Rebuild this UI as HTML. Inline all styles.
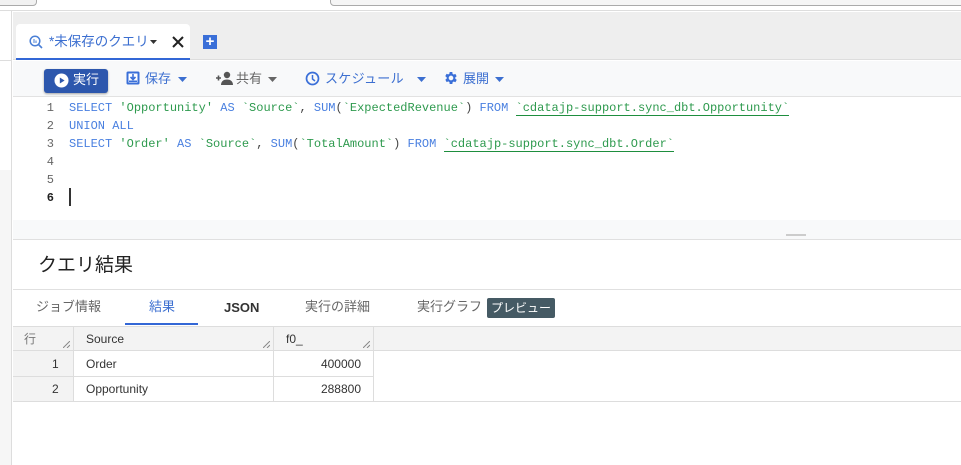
<!DOCTYPE html>
<html><head><meta charset="utf-8"><style>
*{box-sizing:border-box;margin:0;padding:0}
body{width:961px;height:465px;overflow:hidden;background:#fff;font-family:"Liberation Sans","Noto Sans CJK JP",sans-serif;position:relative}
.a{position:absolute;line-height:16px}
.mono{font-family:"Liberation Mono",monospace;font-size:12px}
</style></head><body>
<div class="a" style="left:0;top:0;width:961px;height:11px;background:#fff;border-bottom:1px solid #ddd"></div>
<div class="a" style="left:-5px;top:-6px;width:42px;height:12px;border:1px solid #aaa;border-radius:4px;background:#f1f1f1"></div>
<div class="a" style="left:330px;top:-6px;width:640px;height:12px;border:1px solid #aaa;border-radius:4px;background:#f5f5f5"></div>
<div class="a" style="left:0;top:11px;width:12px;height:454px;background:#fff;border-right:1px solid #ddd"></div>
<div class="a" style="left:0;top:60px;width:12px;height:1px;background:#ddd"></div>
<div class="a" style="left:0;top:170px;width:12px;height:295px;background:#f6f6f6;border-right:1px solid #ddd"></div>
<div class="a" style="left:13px;top:12px;width:948px;height:48px;background:#eeeeee;border-bottom:1px solid #ddd"></div>
<div class="a" style="left:16px;top:24px;width:174px;height:36px;background:#fff;border-radius:4px 4px 0 0;border-bottom:2px solid #3367d6"></div>
<svg class="a" style="left:29px;top:35px" width="14" height="14" viewBox="0 0 14 14"><circle cx="6" cy="6" r="4.8" fill="none" stroke="#4a7fd6" stroke-width="1.5"/><path d="M9.5 9.5L13 13" stroke="#4a7fd6" stroke-width="1.6"/><path d="M5 4v4M7 5.5v2.5" stroke="#4a7fd6" stroke-width="1"/></svg>
<div class="a" style="left:49px;top:34px;font-size:13.5px;color:#3c6fd0">*未保存のクエリ</div>
<svg class="a" style="left:150px;top:40px" width="7" height="4"><path d="M0 0h7L3.5 4z" fill="#333"/></svg>
<svg class="a" style="left:172px;top:36px" width="12" height="12"><path d="M1 1L11 11M11 1L1 11" stroke="#222" stroke-width="2"/></svg>
<div class="a" style="left:203px;top:35px;width:14px;height:14px;background:#3a6fd8;color:#fff;font-size:15px;line-height:13px;text-align:center;font-weight:bold">+</div>
<div class="a" style="left:13px;top:61px;width:948px;height:36px;background:#f8f9fa;border-bottom:1px solid #e2e2e2"></div>
<div class="a" style="left:44px;top:69px;width:64px;height:24px;background:#2d57ad;border-radius:3px;box-shadow:0 1px 2px rgba(0,0,0,.35)"></div>
<svg class="a" style="left:54px;top:73px" width="15" height="15"><circle cx="7.5" cy="7.5" r="7" fill="#fff"/><path d="M5.8 4.5v6l4.8-3z" fill="#2d57ad"/></svg>
<div class="a" style="left:73px;top:72px;font-size:13px;color:#fff">実行</div>
<svg class="a" style="left:126px;top:71px" width="14" height="14"><rect x="0.5" y="0.5" width="13" height="13" rx="1.5" fill="#3a6fd8"/><rect x="2.5" y="2.5" width="9" height="9" fill="#fff"/><path d="M7 3v5M4.5 6l2.5 2.5 2.5-2.5" stroke="#3a6fd8" stroke-width="1.6" fill="none"/><rect x="3" y="9.5" width="8" height="1.5" fill="#3a6fd8"/></svg>
<div class="a" style="left:145px;top:71px;font-size:13px;color:#3c6fd0">保存</div>
<svg class="a" style="left:178px;top:77px" width="9" height="5"><path d="M0 0h9L4.5 5z" fill="#3c6fd0"/></svg>
<svg class="a" style="left:215px;top:71px" width="20" height="14"><path d="M1 7h5M3.5 4.5v5" stroke="#555" stroke-width="1.6"/><circle cx="12" cy="4" r="3.2" fill="#555"/><path d="M6 14c0-4 3-5.5 6-5.5s6 1.5 6 5.5z" fill="#555"/></svg>
<div class="a" style="left:236px;top:71px;font-size:13px;color:#666">共有</div>
<svg class="a" style="left:268px;top:77px" width="9" height="5"><path d="M0 0h9L4.5 5z" fill="#666"/></svg>
<svg class="a" style="left:305px;top:71px" width="15" height="15"><circle cx="7.5" cy="7.5" r="6" fill="none" stroke="#3a6fd8" stroke-width="1.7"/><path d="M7.5 4v4l2.5 2" stroke="#3a6fd8" stroke-width="1.5" fill="none"/></svg>
<div class="a" style="left:325px;top:71px;font-size:13px;color:#3c6fd0;letter-spacing:0.3px">スケジュール</div>
<svg class="a" style="left:417px;top:77px" width="9" height="5"><path d="M0 0h9L4.5 5z" fill="#3c6fd0"/></svg>
<svg class="a" style="left:443px;top:70px" width="16" height="16" viewBox="0 0 24 24"><path fill="#3a6fd8" d="M19.4 13a7.5 7.5 0 0 0 0-2l2.1-1.6-2-3.5-2.5 1a7 7 0 0 0-1.7-1L15 3h-4l-.4 2.7a7 7 0 0 0-1.7 1l-2.5-1-2 3.5L6.6 11a7.5 7.5 0 0 0 0 2l-2.1 1.6 2 3.5 2.5-1a7 7 0 0 0 1.7 1L11 21h4l.4-2.7a7 7 0 0 0 1.7-1l2.5 1 2-3.5zM13 15.5a3.5 3.5 0 1 1 0-7 3.5 3.5 0 0 1 0 7z" transform="translate(-1 0)"/></svg>
<div class="a" style="left:463px;top:71px;font-size:13px;color:#3c6fd0">展開</div>
<svg class="a" style="left:495px;top:77px" width="9" height="5"><path d="M0 0h9L4.5 5z" fill="#3c6fd0"/></svg>
<div class="a" style="left:13px;top:97px;width:948px;height:123px;background:#fff"></div>
<div class="a" style="left:13px;top:220px;width:948px;height:20px;background:#f8f9fa;border-bottom:1px solid #e0e0e0"></div>
<div class="a" style="left:786px;top:234px;width:20px;height:2px;background:#ccc"></div>
<div class="a mono" style="left:30px;top:99px;width:24px;text-align:right;line-height:18px;color:#666">1<br>2<br>3<br>4<br>5<br><b style="color:#222">6</b></div>
<div class="a mono" style="left:69px;top:99px;line-height:18px;white-space:pre;color:#4a80e0"><span>SELECT </span><span style="color:#2e9a4e">'Opportunity'</span> AS <span style="color:#2e9a4e">`Source`</span><span style="color:#444">, </span>SUM<span style="color:#444">(</span><span style="color:#2e9a4e">`ExpectedRevenue`</span><span style="color:#444">)</span> FROM <span style="color:#2e9a4e;border-bottom:1.5px solid #1e8e3e">`cdatajp-support.sync_dbt.Opportunity`</span>
UNION ALL
SELECT <span style="color:#2e9a4e">'Order'</span> AS <span style="color:#2e9a4e">`Source`</span><span style="color:#444">, </span>SUM<span style="color:#444">(</span><span style="color:#2e9a4e">`TotalAmount`</span><span style="color:#444">)</span> FROM <span style="color:#2e9a4e;border-bottom:1.5px solid #1e8e3e">`cdatajp-support.sync_dbt.Order`</span></div>
<div class="a" style="left:69px;top:188px;width:1.5px;height:18px;background:#333"></div>
<div class="a" style="left:38px;top:255px;font-size:19px;line-height:22px;color:#222">クエリ結果</div>
<div class="a" style="left:13px;top:289px;width:948px;height:1px;background:#e0e0e0"></div>
<div class="a" style="left:36px;top:299px;font-size:13px;color:#666">ジョブ情報</div>
<div class="a" style="left:149px;top:299px;font-size:13px;color:#3c6fd0">結果</div>
<div class="a" style="left:125px;top:323px;width:73px;height:2px;background:#3367d6"></div>
<div class="a" style="left:224px;top:300px;font-size:13px;color:#333;font-weight:bold">JSON</div>
<div class="a" style="left:305px;top:299px;font-size:13px;color:#666">実行の詳細</div>
<div class="a" style="left:417px;top:299px;font-size:13px;color:#666">実行グラフ</div>
<div class="a" style="left:487px;top:298px;width:68px;height:20px;background:#455a64;border-radius:2px;color:#fff;font-size:12px;line-height:20px;text-align:center">プレビュー</div>
<div class="a" style="left:13px;top:326px;width:948px;height:25px;background:#f3f3f3;border-top:1px solid #ddd;border-bottom:1px solid #ddd"></div>
<div class="a" style="left:13px;top:351px;width:61px;height:50px;background:#f3f3f3"></div>
<div class="a" style="left:13px;top:376px;width:361px;height:1px;background:#ddd"></div>
<div class="a" style="left:13px;top:401px;width:948px;height:1px;background:#ddd"></div>
<div class="a" style="left:73px;top:326px;width:1px;height:75px;background:#ddd"></div>
<div class="a" style="left:273px;top:326px;width:1px;height:75px;background:#ddd"></div>
<div class="a" style="left:373px;top:326px;width:1px;height:75px;background:#ddd"></div>
<div class="a" style="left:24px;top:331px;font-size:12px;color:#777">行</div>
<div class="a" style="left:86px;top:331px;font-size:12px;color:#333">Source</div>
<div class="a" style="left:286px;top:331px;font-size:12px;color:#333">f0_</div>
<svg class="a" style="left:63px;top:341px" width="7" height="7"><path d="M0 7L7 0M4 7L7 4" stroke="#888"/></svg>
<svg class="a" style="left:263px;top:341px" width="7" height="7"><path d="M0 7L7 0M4 7L7 4" stroke="#888"/></svg>
<svg class="a" style="left:363px;top:341px" width="7" height="7"><path d="M0 7L7 0M4 7L7 4" stroke="#888"/></svg>
<div class="a" style="left:52px;top:356px;font-size:12px;color:#333">1</div>
<div class="a" style="left:52px;top:381px;font-size:12px;color:#333">2</div>
<div class="a" style="left:86px;top:356px;font-size:12px;color:#333">Order</div>
<div class="a" style="left:86px;top:381px;font-size:12px;color:#333">Opportunity</div>
<div class="a" style="left:280px;top:356px;width:81px;text-align:right;font-size:12px;color:#333">400000</div>
<div class="a" style="left:280px;top:381px;width:81px;text-align:right;font-size:12px;color:#333">288800</div>
</body></html>
